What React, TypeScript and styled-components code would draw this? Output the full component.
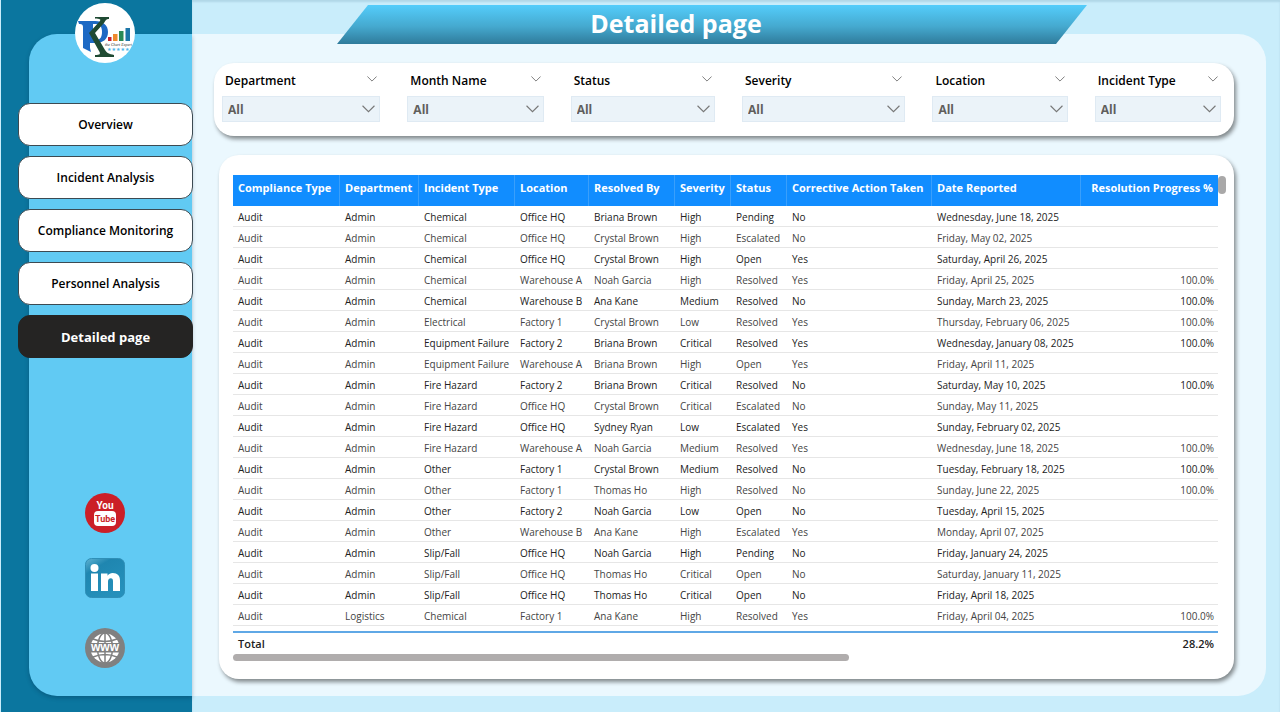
import React from "react";
import styled, { createGlobalStyle, css } from "styled-components";

const GlobalStyle = createGlobalStyle`
  *, *::before, *::after { box-sizing: border-box; }
  body {
    margin: 0;
    font-family: "Open Sans", "Noto Sans", sans-serif;
    color: #222;
    background: #c9edfb;
  }
`;

const Page = styled.div`
  display: grid;
  grid-template-columns: 192px minmax(0, 1fr);
  min-height: 100vh;
  background: #c9edfb;
`;

const Sidebar = styled.aside`
  position: relative;
  z-index: 1;
  display: flex;
  padding: 34px 0 16px 28px;
  background: #0b769f;
  border-left: 1px solid #c9edfb;
`;

const SidebarPanel = styled.div`
  flex: 1;
  min-width: 0;
  display: flex;
  flex-direction: column;
  align-items: center;
  border-radius: 28px 0 0 28px;
  background: #61caf3;
  box-shadow: 0 2px 4px rgba(0, 40, 70, 0.3);
`;

const LogoBadge = styled.div`
  width: 60px;
  height: 60px;
  margin-top: -31px;
  margin-right: 12px;
  flex: none;
`;

const Nav = styled.nav`
  align-self: stretch;
  display: flex;
  flex-direction: column;
  gap: 10px;
  margin: 40px -1px 0 -11px;
`;

const NavButton = styled.button<{ $active?: boolean }>`
  height: 43px;
  padding: 1px 0 0;
  border: 1px solid #3c4a52;
  border-radius: 12px;
  background: #fff;
  color: #000;
  font: 600 12px/16px "Open Sans", "Noto Sans", sans-serif;
  cursor: pointer;
  ${(p) =>
    p.$active &&
    css`
      border-color: #252423;
      background: #252423;
      color: #fff;
      font-size: 13px;
      font-weight: 700;
    `}
`;

const SocialLinks = styled.div`
  display: flex;
  flex-direction: column;
  gap: 25px;
  margin: auto 12px 28px 0;
`;

const SocialLink = styled.a`
  display: block;
  width: 40px;
  height: 40px;
  &:last-child {
    margin-top: 5px;
  }
  svg {
    display: block;
  }
`;

const Main = styled.main`
  display: flex;
  min-width: 0;
  padding: 34px 14px 16px 0;
  box-shadow: inset 0 2px 2px rgba(0, 60, 90, 0.12);
`;

const Surface = styled.div`
  flex: 1;
  min-width: 0;
  display: flex;
  flex-direction: column;
  padding: 0 32px 17px 22px;
  border-radius: 0 28px 28px 0;
  background: #ebf8fe;
`;

const Banner = styled.header`
  height: 39px;
  margin: -29px 147px 0 123px;
  padding: 0 72px 4px 0;
  display: flex;
  align-items: center;
  justify-content: center;
  background: linear-gradient(#54cdfb, #45a9cf 55%, #2f7b9b);
  clip-path: polygon(31px 0, 100% 0, calc(100% - 31px) 100%, 0 100%);
`;

const Title = styled.h1`
  margin: 0;
  color: #fff;
  font-size: 25px;
  line-height: 34px;
  font-weight: 700;
`;

const Card = styled.section`
  border-radius: 20px;
  background: #fff;
  box-shadow: 2px 3px 4px rgba(0, 0, 0, 0.45);
`;

const FilterCard = styled(Card)`
  display: grid;
  grid-template-columns: 158fr 136fr 144fr 163fr 135fr 126fr;
  column-gap: 27px;
  margin-top: 19px;
  padding: 8px 13px 14px 8px;
`;

const Filter = styled.div`
  min-width: 0;
`;

const FilterHead = styled.div`
  display: flex;
  justify-content: space-between;
  align-items: flex-start;
  height: 25px;
  padding: 2px 3px 0;
`;

const FilterLabel = styled.label`
  color: #000;
  font-size: 12px;
  line-height: 16px;
  font-weight: 600;
  white-space: nowrap;
`;

const ExpandButton = styled.button`
  display: flex;
  padding: 3px 0;
  border: 0;
  background: none;
  color: #666;
`;

const SelectBox = styled.div`
  position: relative;
  height: 26px;
  color: #777;
  svg {
    position: absolute;
    right: 5px;
    top: 9px;
    pointer-events: none;
  }
`;

const Select = styled.select`
  appearance: none;
  width: 100%;
  height: 100%;
  padding: 2px 22px 0 5px;
  border: 1px solid #dfeaf3;
  border-radius: 0;
  background: #ebf3f9;
  color: #605e5c;
  font: 700 12px/16px "Open Sans", "Noto Sans", sans-serif;
`;

const TableCard = styled(Card)`
  flex: 1;
  margin: 19px 0 0 5px;
  padding: 20px 8px 17px 14px;
`;

const TableArea = styled.div`
  display: grid;
  grid-template-columns: minmax(0, 1fr) 8px;
`;

const Table = styled.table`
  width: 100%;
  table-layout: fixed;
  border-spacing: 0;
  font-size: 10px;
  line-height: 16px;
  white-space: nowrap;

  th {
    height: 31px;
    padding: 5px 5px 0;
    background: #118dff;
    border-right: 1px solid #3a9ffb;
    color: #fff;
    font-size: 11px;
    font-weight: 700;
    text-align: left;
    vertical-align: top;
  }
  td {
    height: 21px;
    padding: 1px 4px 0 5px;
    border-bottom: 1px solid #e6e6e6;
  }
  th:last-child {
    border-right: 0;
  }
  th:last-child,
  td:last-child {
    text-align: right;
  }
  tbody tr:nth-child(even) {
    color: #444;
  }
  tbody::after {
    content: "";
    display: table-row;
    height: 5px;
  }
  tfoot td {
    height: 23px;
    border-top: 2px solid #5fa8e6;
    border-bottom: 0;
    font-size: 11px;
    font-weight: 600;
  }
`;

const VerticalRail = styled.div`
  padding-top: 1px;
  &::before {
    content: "";
    display: block;
    height: 18px;
    border-radius: 4px;
    background: #a9a8a8;
  }
`;

const HorizontalRail = styled.div`
  margin-right: 8px;
  &::before {
    content: "";
    display: block;
    width: 62.5%;
    height: 7px;
    border-radius: 4px;
    background: #b0adad;
  }
`;

const Chevron = ({ width, height }: { width: number; height: number }) => (
  <svg width={width} height={height} viewBox="0 0 12 7" fill="none" stroke="currentColor" strokeWidth="1" aria-hidden="true">
    <path d="M0.5 0.5L6 6L11.5 0.5" />
  </svg>
);

const Logo = () => (
  <svg width="60" height="60" viewBox="0 0 60 60" role="img" aria-label="RK Chart Expert">
    <circle cx="30" cy="30" r="30" fill="#fff" />
    <path
      fill="#1d69c4"
      fillRule="evenodd"
      d="M3 18h17c8 0 13 4 13 11s-5 11-12 11h-6v5l1 4-8-4V24c0-2-1-3-3-3H4zM18 21v16h3c4 0 6-3 6-8s-2-8-6-8z"
    />
    <path
      fill="#1f4a33"
      d="M20 14h14v2c-3 0-3 1-5 4l-9 10 10 17c2 3 4 4 9 5v2H20v-2c5 0 6-1 4-4L14 30l11-12c1-2 0-2-5-2.500z"
    />
    <path fill="#c8202f" d="M33 34h3.500v4H33z" />
    <path fill="#ef8a2c" d="M38 31h4.500v7H38z" />
    <path fill="#2a8a55" d="M44 28h4.500v10H44z" />
    <path fill="#1d76a8" d="M50.500 25H55v13h-4.500z" />
    <text x="30" y="43" fontSize="4" fontFamily="Liberation Serif, serif" fontStyle="italic" fill="#333">
      the Chart Expert
    </text>
    <text x="32" y="48" fontSize="5" fontFamily="DejaVu Sans, sans-serif" fill="#4db5e8">
      ★★★★★
    </text>
  </svg>
);

const YouTubeIcon = () => (
  <svg width="40" height="40" viewBox="0 0 40 40" aria-hidden="true">
    <circle cx="20" cy="20" r="20" fill="#cb1f27" />
    <rect x="9" y="18" width="22" height="15" rx="4" fill="#fff" />
    <g fontFamily="Roboto, sans-serif" fontWeight="700" textAnchor="middle">
      <text x="20" y="16" fontSize="10" fill="#fff">
        You
      </text>
      <text x="20" y="29" fontSize="9" fill="#cb1f27">
        Tube
      </text>
    </g>
  </svg>
);

const LinkedInIcon = () => (
  <svg width="40" height="40" viewBox="0 0 40 40" aria-hidden="true">
    <defs>
      <linearGradient id="linkedin-gloss" x1="0" y1="0" x2="0.6" y2="1">
        <stop offset="0" stopColor="#62b4d3" />
        <stop offset="0.3" stopColor="#1f86b0" />
        <stop offset="1" stopColor="#2590bb" />
      </linearGradient>
    </defs>
    <rect x="0.500" y="0.500" width="39" height="39" rx="6" fill="url(#linkedin-gloss)" stroke="#2f8fb7" />
    <circle cx="9.500" cy="10" r="4" fill="#fff" />
    <path
      fill="#fff"
      d="M6 15.500h7V33H6zM16 15.500h6.500v2.200c1.400-1.900 3-2.700 5.200-2.700 4.800 0 7.300 2.800 7.300 7.500V33h-7v-9.500c0-2-.6-3.200-2.200-3.200-1.800 0-2.800 1.500-2.800 3.500V33h-7z"
    />
  </svg>
);

const WebIcon = () => (
  <svg width="40" height="40" viewBox="0 0 40 40" aria-hidden="true">
    <circle cx="20" cy="20" r="20" fill="#808080" />
    <circle cx="20" cy="20" r="14.500" fill="#fff" />
    <g fill="none" stroke="#808080" strokeWidth="1.500">
      <path d="M20 5v30M8 11q12 5 24 0M8 29q12-5 24 0" />
      <ellipse cx="20" cy="20" rx="7.500" ry="15" />
    </g>
    <path fill="#808080" d="M4 15h32v9.500H4z" />
    <text x="20" y="23" fontSize="12" fontWeight="700" fontFamily="'Liberation Sans', sans-serif" textAnchor="middle" fill="#fff">
      www
    </text>
  </svg>
);

const pages = ["Overview", "Incident Analysis", "Compliance Monitoring", "Personnel Analysis", "Detailed page"];

const filters = ["Department", "Month Name", "Status", "Severity", "Location", "Incident Type"];

const columns: { name: string; width: number }[] = [
  { name: "Compliance Type", width: 107 },
  { name: "Department", width: 79 },
  { name: "Incident Type", width: 96 },
  { name: "Location", width: 74 },
  { name: "Resolved By", width: 86 },
  { name: "Severity", width: 56 },
  { name: "Status", width: 56 },
  { name: "Corrective Action Taken", width: 145 },
  { name: "Date Reported", width: 149 },
  { name: "Resolution Progress %", width: 137 },
];

const rows: string[][] = [
  ["Audit", "Admin", "Chemical", "Office HQ", "Briana Brown", "High", "Pending", "No", "Wednesday, June 18, 2025", ""],
  ["Audit", "Admin", "Chemical", "Office HQ", "Crystal Brown", "High", "Escalated", "No", "Friday, May 02, 2025", ""],
  ["Audit", "Admin", "Chemical", "Office HQ", "Crystal Brown", "High", "Open", "Yes", "Saturday, April 26, 2025", ""],
  ["Audit", "Admin", "Chemical", "Warehouse A", "Noah Garcia", "High", "Resolved", "Yes", "Friday, April 25, 2025", "100.0%"],
  ["Audit", "Admin", "Chemical", "Warehouse B", "Ana Kane", "Medium", "Resolved", "No", "Sunday, March 23, 2025", "100.0%"],
  ["Audit", "Admin", "Electrical", "Factory 1", "Crystal Brown", "Low", "Resolved", "Yes", "Thursday, February 06, 2025", "100.0%"],
  ["Audit", "Admin", "Equipment Failure", "Factory 2", "Briana Brown", "Critical", "Resolved", "Yes", "Wednesday, January 08, 2025", "100.0%"],
  ["Audit", "Admin", "Equipment Failure", "Warehouse A", "Briana Brown", "High", "Open", "Yes", "Friday, April 11, 2025", ""],
  ["Audit", "Admin", "Fire Hazard", "Factory 2", "Briana Brown", "Critical", "Resolved", "No", "Saturday, May 10, 2025", "100.0%"],
  ["Audit", "Admin", "Fire Hazard", "Office HQ", "Crystal Brown", "Critical", "Escalated", "No", "Sunday, May 11, 2025", ""],
  ["Audit", "Admin", "Fire Hazard", "Office HQ", "Sydney Ryan", "Low", "Escalated", "Yes", "Sunday, February 02, 2025", ""],
  ["Audit", "Admin", "Fire Hazard", "Warehouse A", "Noah Garcia", "Medium", "Resolved", "Yes", "Wednesday, June 18, 2025", "100.0%"],
  ["Audit", "Admin", "Other", "Factory 1", "Crystal Brown", "Medium", "Resolved", "No", "Tuesday, February 18, 2025", "100.0%"],
  ["Audit", "Admin", "Other", "Factory 1", "Thomas Ho", "High", "Resolved", "No", "Sunday, June 22, 2025", "100.0%"],
  ["Audit", "Admin", "Other", "Factory 2", "Noah Garcia", "Low", "Open", "No", "Tuesday, April 15, 2025", ""],
  ["Audit", "Admin", "Other", "Warehouse B", "Ana Kane", "High", "Escalated", "Yes", "Monday, April 07, 2025", ""],
  ["Audit", "Admin", "Slip/Fall", "Office HQ", "Noah Garcia", "High", "Pending", "No", "Friday, January 24, 2025", ""],
  ["Audit", "Admin", "Slip/Fall", "Office HQ", "Thomas Ho", "Critical", "Open", "No", "Saturday, January 11, 2025", ""],
  ["Audit", "Admin", "Slip/Fall", "Office HQ", "Thomas Ho", "Critical", "Open", "No", "Friday, April 18, 2025", ""],
  ["Audit", "Logistics", "Chemical", "Factory 1", "Ana Kane", "High", "Resolved", "Yes", "Friday, April 04, 2025", "100.0%"],
];

export default function App() {
  return (
    <>
      <GlobalStyle />
      <Page>
        <Sidebar>
          <SidebarPanel>
            <LogoBadge>
              <Logo />
            </LogoBadge>
            <Nav>
              {pages.map((page) => (
                <NavButton key={page} type="button" $active={page === "Detailed page"}>
                  {page}
                </NavButton>
              ))}
            </Nav>
            <SocialLinks>
              <SocialLink href="#youtube" aria-label="YouTube">
                <YouTubeIcon />
              </SocialLink>
              <SocialLink href="#linkedin" aria-label="LinkedIn">
                <LinkedInIcon />
              </SocialLink>
              <SocialLink href="#website" aria-label="Website">
                <WebIcon />
              </SocialLink>
            </SocialLinks>
          </SidebarPanel>
        </Sidebar>
        <Main>
          <Surface>
            <Banner>
              <Title>Detailed page</Title>
            </Banner>
            <FilterCard>
              {filters.map((name) => {
                const id = name.toLowerCase().replace(" ", "-");
                return (
                  <Filter key={name}>
                    <FilterHead>
                      <FilterLabel htmlFor={id}>{name}</FilterLabel>
                      <ExpandButton type="button" aria-label={`${name} options`}>
                        <Chevron width={10} height={6} />
                      </ExpandButton>
                    </FilterHead>
                    <SelectBox>
                      <Select id={id} defaultValue="All">
                        <option>All</option>
                      </Select>
                      <Chevron width={13} height={8} />
                    </SelectBox>
                  </Filter>
                );
              })}
            </FilterCard>
            <TableCard>
              <TableArea>
                <Table>
                  <colgroup>
                    {columns.map((c) => (
                      <col key={c.name} width={c.width} />
                    ))}
                  </colgroup>
                  <thead>
                    <tr>
                      {columns.map((c) => (
                        <th key={c.name} scope="col">
                          {c.name}
                        </th>
                      ))}
                    </tr>
                  </thead>
                  <tbody>
                    {rows.map((row, i) => (
                      <tr key={i}>
                        {row.map((cell, j) => (
                          <td key={j}>{cell}</td>
                        ))}
                      </tr>
                    ))}
                  </tbody>
                  <tfoot>
                    <tr>
                      <td colSpan={9}>Total</td>
                      <td>28.2%</td>
                    </tr>
                  </tfoot>
                </Table>
                <VerticalRail />
              </TableArea>
              <HorizontalRail />
            </TableCard>
          </Surface>
        </Main>
      </Page>
    </>
  );
}
